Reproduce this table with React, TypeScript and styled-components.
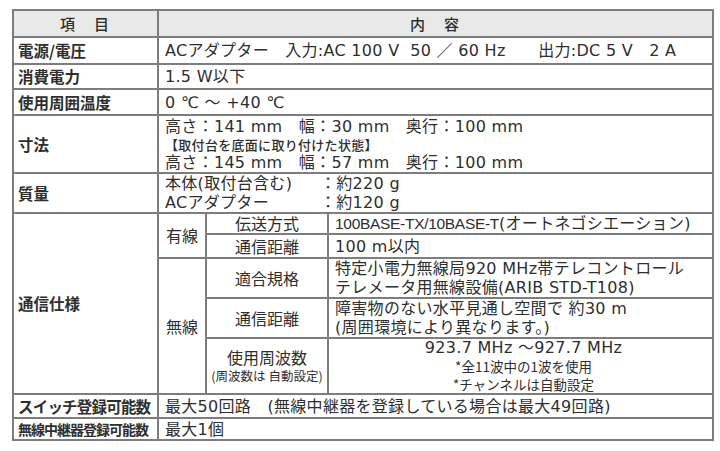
import React from 'react';
import styled, { createGlobalStyle } from 'styled-components';

const GlobalStyle = createGlobalStyle`
  body {
    margin: 0;
    background: #ffffff;
    font-family: "DejaVu Sans", "Noto Sans CJK JP", sans-serif;
    color: #2e2e2e;
  }
`;

const Page = styled.div`
  width: 720px;
  height: 451px;
  padding: 9px 0 0 12px;
  box-sizing: border-box;
`;

const Table = styled.table`
  border-collapse: collapse;
  table-layout: fixed;
  width: 700px;
  border: 2px solid #5a5a5a;
  border-bottom-color: #2a2a2a;
  font-size: 16px;
  line-height: 19px;
`;

const Row = styled.tr<{ $h: number }>`
  height: ${(p) => p.$h}px;
`;

const HeadCell = styled.th`
  background: #e9e9e9;
  border: 2px solid #7d7d7d;
  font-family: "Noto Sans CJK JP", sans-serif;
  font-weight: 500;
  font-size: 15px;
  text-align: center;
  padding: 0;
  letter-spacing: 2px;
`;

const Label = styled.td<{ $size?: number; $tight?: number }>`
  border: 2px solid #7d7d7d;
  font-family: "Noto Sans CJK JP", sans-serif;
  font-weight: 700;
  font-size: ${(p) => p.$size ?? 15.5}px;
  padding: 0 0 0 4px;
  white-space: nowrap;
  overflow: hidden;
  letter-spacing: ${(p) => p.$tight ?? 0}px;
`;

const SubLabel = styled.td`
  border: 2px solid #7d7d7d;
  font-family: "Noto Sans CJK JP", sans-serif;
  text-align: center;
  padding: 0;
  white-space: nowrap;
`;

const Value = styled.td<{ $center?: boolean }>`
  border: 2px solid #7d7d7d;
  padding: 0 0 0 6px;
  white-space: pre;
  letter-spacing: 0.3px;
  text-align: ${(p) => (p.$center ? 'center' : 'left')};
`;

const Narrow = styled.span`
  font-family: "Liberation Sans", sans-serif;
  font-size: 15.5px;
  letter-spacing: -0.3px;
`;

const Main = styled.div`
  line-height: 18px;
`;

const Small = styled.div<{ $size?: number }>`
  font-family: "Noto Sans CJK JP", sans-serif;
  font-size: ${(p) => p.$size ?? 13.5}px;
  line-height: 18px;
  letter-spacing: 0;
`;

const Note = styled.div`
  font-family: "Noto Sans CJK JP", sans-serif;
  font-size: 13px;
  line-height: 17px;
  font-weight: 500;
`;

const WeightGrid = styled.div`
  display: grid;
  grid-template-columns: 155px auto;
`;

const specs = [
  { label: '電源/電圧', value: 'ACアダプター　入力:AC 100 V  50 ／ 60 Hz　　出力:DC 5 V   2 A', h: 27 },
  { label: '消費電力', value: '1.5 W以下', h: 25 },
  { label: '使用周囲温度', value: '0 ℃ ～ +40 ℃', h: 26 },
];

export default function App() {
  return (
    <Page>
      <GlobalStyle />
      <Table>
        <colgroup>
          <col style={{ width: 145 }} />
          <col style={{ width: 48 }} />
          <col style={{ width: 122 }} />
          <col style={{ width: 385 }} />
        </colgroup>
        <tbody>
          <Row $h={27}>
            <HeadCell>項　目</HeadCell>
            <HeadCell colSpan={3}>内　容</HeadCell>
          </Row>
          {specs.map((s) => (
            <Row $h={s.h} key={s.label}>
              <Label>{s.label}</Label>
              <Value colSpan={3}>{s.value}</Value>
            </Row>
          ))}
          <Row $h={58}>
            <Label>寸法</Label>
            <Value colSpan={3}>
              <div>高さ：141 mm　幅：30 mm　奥行：100 mm</div>
              <Note>【取付台を底面に取り付けた状態】</Note>
              <div>高さ：145 mm　幅：57 mm　奥行：100 mm</div>
            </Value>
          </Row>
          <Row $h={40}>
            <Label>質量</Label>
            <Value colSpan={3}>
              <WeightGrid>
                <span>本体(取付台含む)</span>
                <span>：約220 g</span>
                <span>ACアダプター</span>
                <span>：約120 g</span>
              </WeightGrid>
            </Value>
          </Row>
          <Row $h={21}>
            <Label rowSpan={5}>通信仕様</Label>
            <SubLabel rowSpan={2}>有線</SubLabel>
            <SubLabel>伝送方式</SubLabel>
            <Value>
              <Narrow>100BASE-TX/10BASE-T</Narrow>(オートネゴシエーション)
            </Value>
          </Row>
          <Row $h={24}>
            <SubLabel>通信距離</SubLabel>
            <Value>100 m以内</Value>
          </Row>
          <Row $h={40}>
            <SubLabel rowSpan={3}>無線</SubLabel>
            <SubLabel>適合規格</SubLabel>
            <Value>
              <div>特定小電力無線局920 MHz帯テレコントロール</div>
              <div>テレメータ用無線設備(ARIB STD-T108)</div>
            </Value>
          </Row>
          <Row $h={39}>
            <SubLabel>通信距離</SubLabel>
            <Value>
              <div>障害物のない水平見通し空間で 約30 m</div>
              <div>(周囲環境により異なります。)</div>
            </Value>
          </Row>
          <Row $h={56}>
            <SubLabel>
              <div>使用周波数</div>
              <Small $size={12.5}>(周波数は 自動設定)</Small>
            </SubLabel>
            <Value $center>
              <Main>923.7 MHz ～927.7 MHz</Main>
              <Small>*全11波中の1波を使用</Small>
              <Small>*チャンネルは自動設定</Small>
            </Value>
          </Row>
          <Row $h={24}>
            <Label $tight={-0.8}>スイッチ登録可能数</Label>
            <Value colSpan={3}>最大50回路　(無線中継器を登録している場合は最大49回路)</Value>
          </Row>
          <Row $h={22}>
            <Label $size={14} $tight={-1}>無線中継器登録可能数</Label>
            <Value colSpan={3}>最大1個</Value>
          </Row>
        </tbody>
      </Table>
    </Page>
  );
}
